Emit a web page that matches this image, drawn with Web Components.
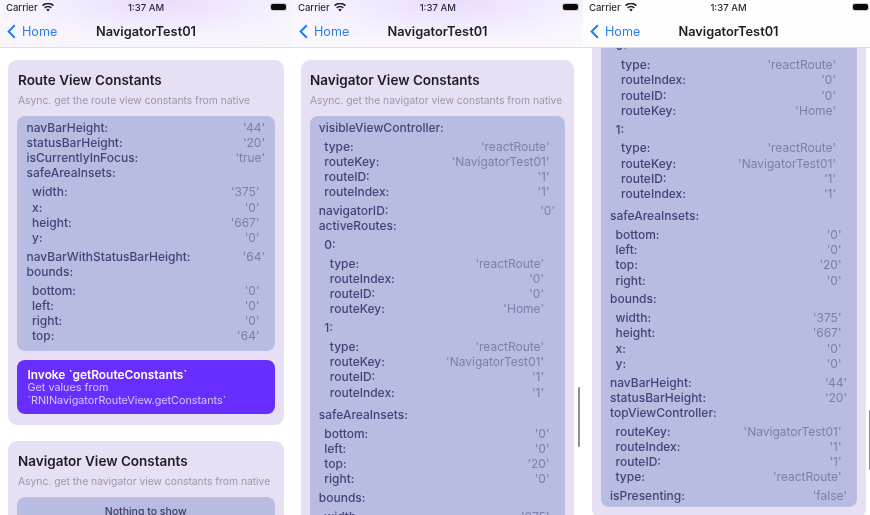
<!DOCTYPE html>
<html>
<head>
<meta charset="utf-8">
<title>NavigatorTest01</title>
<style>
  body { margin: 0; background: #fff; font-family: Inter, "Liberation Sans", sans-serif; }
</style>
</head>
<body>
<x-app></x-app>
<script>
class XStatusBar extends HTMLElement {
    constructor() {
        super();
        this.attachShadow({ mode: 'open' });
    }

    connectedCallback() {
        this.shadowRoot.innerHTML = `
            <style>
            :host {
                display: grid;
                grid-template-columns: 1fr auto 1fr;
                align-items: center;
                height: 14px;
                padding: 0 var(--status-r, 6px) 0 6px;
                font-size: 9.5px;
                font-weight: 500;
                color: #2b2b33;
            }
            .left { display: flex; align-items: center; gap: 4px; }
            .right { display: flex; justify-content: flex-end; }
            .battery {
                width: 15px;
                height: 6px;
                background: #0a0a0a;
                border-radius: 2px;
                box-shadow: 0 0 0 1px #c9c9cc;
            }
            </style>
            <div class="left">
                <span>Carrier</span>
                <svg width="12" height="9" viewBox="0 0 12 9"><path d="M6 8.6 4.2 6.5a2.7 2.7 0 0 1 3.6 0zM3.2 5.4 2.1 4.2a5.8 5.8 0 0 1 7.8 0L8.8 5.4a4.2 4.2 0 0 0-5.6 0zM1.1 3.2 0 2A8.9 8.9 0 0 1 12 2l-1.1 1.2a7.3 7.3 0 0 0-9.8 0z" fill="#222"/></svg>
            </div>
            <span>1:37 AM</span>
            <div class="right"><div class="battery"></div></div>
        `;
    }
}

class XNavBar extends HTMLElement {
    constructor() {
        super();
        this.attachShadow({ mode: 'open' });
    }

    connectedCallback() {
        this.shadowRoot.innerHTML = `
            <style>
            :host {
                display: block;
                flex: none;
                height: 48px;
                width: var(--bar-w, auto);
                box-sizing: border-box;
                border-bottom: 1px solid #e0dde6;
                background: var(--bar-bg, #fff);
                position: relative;
                z-index: 1;
            }
            .bar {
                display: grid;
                grid-template-columns: 1fr auto 1fr;
                align-items: center;
                height: 34px;
                padding: 0 7px;
            }
            .back {
                display: flex;
                align-items: center;
                gap: 6px;
                color: #2a7ff0;
                font-size: 12.6px;
            }
            .title {
                font-size: 12.8px;
                font-weight: 600;
                color: #1d1d22;
            }
            </style>
            <x-status-bar></x-status-bar>
            <div class="bar">
                <div class="back">
                    <svg width="9" height="15" viewBox="0 0 9 15"><path d="M7.8 1.2 1.6 7.5l6.2 6.3" fill="none" stroke="#1f7cf5" stroke-width="2"/></svg>
                    <span>Home</span>
                </div>
                <div class="title">NavigatorTest01</div>
                <div></div>
            </div>
        `;
    }
}

class XRow extends HTMLElement {
    constructor() {
        super();
        this.attachShadow({ mode: 'open' });
    }

    connectedCallback() {
        this.shadowRoot.innerHTML = `
            <style>
            :host {
                display: flex;
                justify-content: space-between;
                height: var(--row-h, 15.2px);
                line-height: var(--row-h, 15.2px);
                font-size: 12px;
                white-space: nowrap;
            }
            .k { font-weight: 500; color: #45427a; }
            .v { color: #7d7ea9; }
            </style>
            <span class="k">${this.getAttribute('k')}:</span>
            <span class="v">${this.getAttribute('v') ?? ''}</span>
        `;
    }
}

class XGroup extends HTMLElement {
    constructor() {
        super();
        this.attachShadow({ mode: 'open' });
    }

    connectedCallback() {
        this.shadowRoot.innerHTML = `
            <style>
            :host { display: block; }
            .kids { padding: 3.8px 5.5px; }
            </style>
            <x-row k="${this.getAttribute('k')}"></x-row>
            <div class="kids"><slot></slot></div>
        `;
    }
}

class XCard extends HTMLElement {
    constructor() {
        super();
        this.attachShadow({ mode: 'open' });
    }

    connectedCallback() {
        this.shadowRoot.innerHTML = `
            <style>
            :host {
                display: block;
                background: #e7e0f4;
                border-radius: 9px;
                padding: 11px 9px;
                margin-bottom: 16px;
            }
            .title {
                font-size: 13.5px;
                font-weight: 600;
                line-height: 18px;
                padding-left: var(--text-l, 1px);
                color: #1d1c24;
            }
            .sub {
                font-size: 10.3px;
                line-height: 14px;
                margin: 4px 0 9px;
                padding-left: var(--text-l, 1px);
                color: #9a96a8;
                white-space: nowrap;
            }
            .box {
                background: #b8bce0;
                border-radius: 8px;
                padding: 4px 10px 4px var(--box-l, 9.5px);
            }
            ::slotted([slot="after"]) { margin-top: 9px; }
            </style>
            <div class="title">${this.getAttribute('heading')}</div>
            <div class="sub">${this.getAttribute('sub')}</div>
            <div class="box"><slot></slot></div>
            <slot name="after"></slot>
        `;
    }
}

class XInvoke extends HTMLElement {
    constructor() {
        super();
        this.attachShadow({ mode: 'open' });
    }

    connectedCallback() {
        this.shadowRoot.innerHTML = `
            <style>
            :host {
                display: block;
                background: #682eff;
                border-radius: 8px;
                padding: 7.5px 10px 6.5px 10.5px;
                color: #fff;
                font-size: 10.8px;
                line-height: 13.2px;
            }
            b { font-weight: 600; font-size: 11.9px; display: block; }
            span { color: #d3c5ff; display: block; }
            </style>
            <b><slot name="title"></slot></b>
            <span><slot></slot></span>
        `;
    }
}

class XEmpty extends HTMLElement {
    constructor() {
        super();
        this.attachShadow({ mode: 'open' });
    }

    connectedCallback() {
        this.shadowRoot.innerHTML = `
            <style>
            :host {
                display: block;
                text-align: center;
                font-size: 10.5px;
                font-weight: 500;
                color: #3e3c66;
                padding: 4px 0 6px;
            }
            </style>
            <slot></slot>
        `;
    }
}

class XPhone extends HTMLElement {
    constructor() {
        super();
        this.attachShadow({ mode: 'open' });
    }

    connectedCallback() {
        const scroll = this.getAttribute('scroll') || 0;
        const thumb = this.getAttribute('thumb');
        this.shadowRoot.innerHTML = `
            <style>
            :host {
                display: flex;
                flex-direction: column;
                flex: none;
                height: 515px;
                overflow: hidden;
                position: relative;
                background: #fff;
            }
            .content {
                flex: 1;
                min-height: 0;
                overflow: hidden;
                padding: 0 var(--pad-r, 8px) 0 var(--pad-l, 8px);
            }
            .inner { margin-top: calc(12px - ${scroll}px); }
            .thumb {
                position: absolute;
                top: ${thumb}px;
                right: var(--thumb-r, 3px);
                width: 2px;
                height: 60px;
                border-radius: 1px;
                background: #8e8e93;
                z-index: 2;
            }
            </style>
            <x-nav-bar></x-nav-bar>
            <div class="content"><div class="inner"><slot></slot></div></div>
            ${thumb ? '<div class="thumb"></div>' : ''}
        `;
    }
}

class XNavigatorConstants extends HTMLElement {
    constructor() {
        super();
        this.attachShadow({ mode: 'open' });
    }

    connectedCallback() {
        this.shadowRoot.innerHTML = `
            <style>:host { display: block; }</style>
            <x-card heading="Navigator View Constants" sub="Async. get the navigator view constants from native">
                <x-group k="visibleViewController">
                    <x-row k="type" v="'reactRoute'"></x-row>
                    <x-row k="routeKey" v="'NavigatorTest01'"></x-row>
                    <x-row k="routeID" v="'1'"></x-row>
                    <x-row k="routeIndex" v="'1'"></x-row>
                </x-group>
                <x-row k="navigatorID" v="'0'"></x-row>
                <x-group k="activeRoutes">
                    <x-group k="0">
                        <x-row k="type" v="'reactRoute'"></x-row>
                        <x-row k="routeIndex" v="'0'"></x-row>
                        <x-row k="routeID" v="'0'"></x-row>
                        <x-row k="routeKey" v="'Home'"></x-row>
                    </x-group>
                    <x-group k="1">
                        <x-row k="type" v="'reactRoute'"></x-row>
                        <x-row k="routeKey" v="'NavigatorTest01'"></x-row>
                        <x-row k="routeID" v="'1'"></x-row>
                        <x-row k="routeIndex" v="'1'"></x-row>
                    </x-group>
                </x-group>
                <x-group k="safeAreaInsets">
                    <x-row k="bottom" v="'0'"></x-row>
                    <x-row k="left" v="'0'"></x-row>
                    <x-row k="top" v="'20'"></x-row>
                    <x-row k="right" v="'0'"></x-row>
                </x-group>
                <x-group k="bounds">
                    <x-row k="width" v="'375'"></x-row>
                    <x-row k="height" v="'667'"></x-row>
                    <x-row k="x" v="'0'"></x-row>
                    <x-row k="y" v="'0'"></x-row>
                </x-group>
                <x-row k="navBarHeight" v="'44'"></x-row>
                <x-row k="statusBarHeight" v="'20'"></x-row>
                <x-group k="topViewController">
                    <x-row k="routeKey" v="'NavigatorTest01'"></x-row>
                    <x-row k="routeIndex" v="'1'"></x-row>
                    <x-row k="routeID" v="'1'"></x-row>
                    <x-row k="type" v="'reactRoute'"></x-row>
                </x-group>
                <x-row k="isPresenting" v="'false'"></x-row>
            </x-card>
        `;
    }
}

class XApp extends HTMLElement {
    constructor() {
        super();
        this.attachShadow({ mode: 'open' });
    }

    connectedCallback() {
        this.shadowRoot.innerHTML = `
            <style>
            :host {
                display: flex;
                width: 870px;
                height: 515px;
                overflow: hidden;
                filter: blur(0.4px);
            }
            .one { width: 292px; --row-h: 15.17px; --bar-bg: radial-gradient(ellipse 190px 50px at 55% 0, #e9dcfd, #f7f3fd 75%, #f8f6fb); }
            .two { width: 291px; --pad-l: 9px; --pad-r: 9px; --row-h: 15.12px; --text-l: 0px; --box-l: 8.8px; --thumb-r: 3px; --status-r: 5.5px; --bar-bg: radial-gradient(ellipse 190px 50px at 55% 0, #e9dcfd, #f8f4fe 80%, #faf8fd); }
            .three { width: 287px; --pad-l: 9px; --pad-r: 4px; --row-h: 15.1px; --text-l: 0px; --box-l: 9px; --thumb-r: -1px; --bar-w: 291px; --bar-bg: #fdfdfe; }
            </style>
            <x-phone class="one">
                <x-card heading="Route View Constants" sub="Async. get the route view constants from native">
                    <x-row k="navBarHeight" v="'44'"></x-row>
                    <x-row k="statusBarHeight" v="'20'"></x-row>
                    <x-row k="isCurrentlyInFocus" v="'true'"></x-row>
                    <x-group k="safeAreaInsets">
                        <x-row k="width" v="'375'"></x-row>
                        <x-row k="x" v="'0'"></x-row>
                        <x-row k="height" v="'667'"></x-row>
                        <x-row k="y" v="'0'"></x-row>
                    </x-group>
                    <x-row k="navBarWithStatusBarHeight" v="'64'"></x-row>
                    <x-group k="bounds">
                        <x-row k="bottom" v="'0'"></x-row>
                        <x-row k="left" v="'0'"></x-row>
                        <x-row k="right" v="'0'"></x-row>
                        <x-row k="top" v="'64'"></x-row>
                    </x-group>
                    <x-invoke slot="after">
                        <span slot="title">Invoke \`getRouteConstants\`</span>
                        Get values from<br>\`RNINavigatorRouteView.getConstants\`
                    </x-invoke>
                </x-card>
                <x-card heading="Navigator View Constants" sub="Async. get the navigator view constants from native">
                    <x-empty>Nothing to show</x-empty>
                </x-card>
            </x-phone>
            <x-phone class="two" thumb="387"><x-navigator-constants></x-navigator-constants></x-phone>
            <x-phone class="three" scroll="198.6" thumb="410"><x-navigator-constants></x-navigator-constants></x-phone>
        `;
    }
}

customElements.define('x-status-bar', XStatusBar);
customElements.define('x-nav-bar', XNavBar);
customElements.define('x-row', XRow);
customElements.define('x-group', XGroup);
customElements.define('x-card', XCard);
customElements.define('x-invoke', XInvoke);
customElements.define('x-empty', XEmpty);
customElements.define('x-phone', XPhone);
customElements.define('x-navigator-constants', XNavigatorConstants);
customElements.define('x-app', XApp);
</script>
</body>
</html>
